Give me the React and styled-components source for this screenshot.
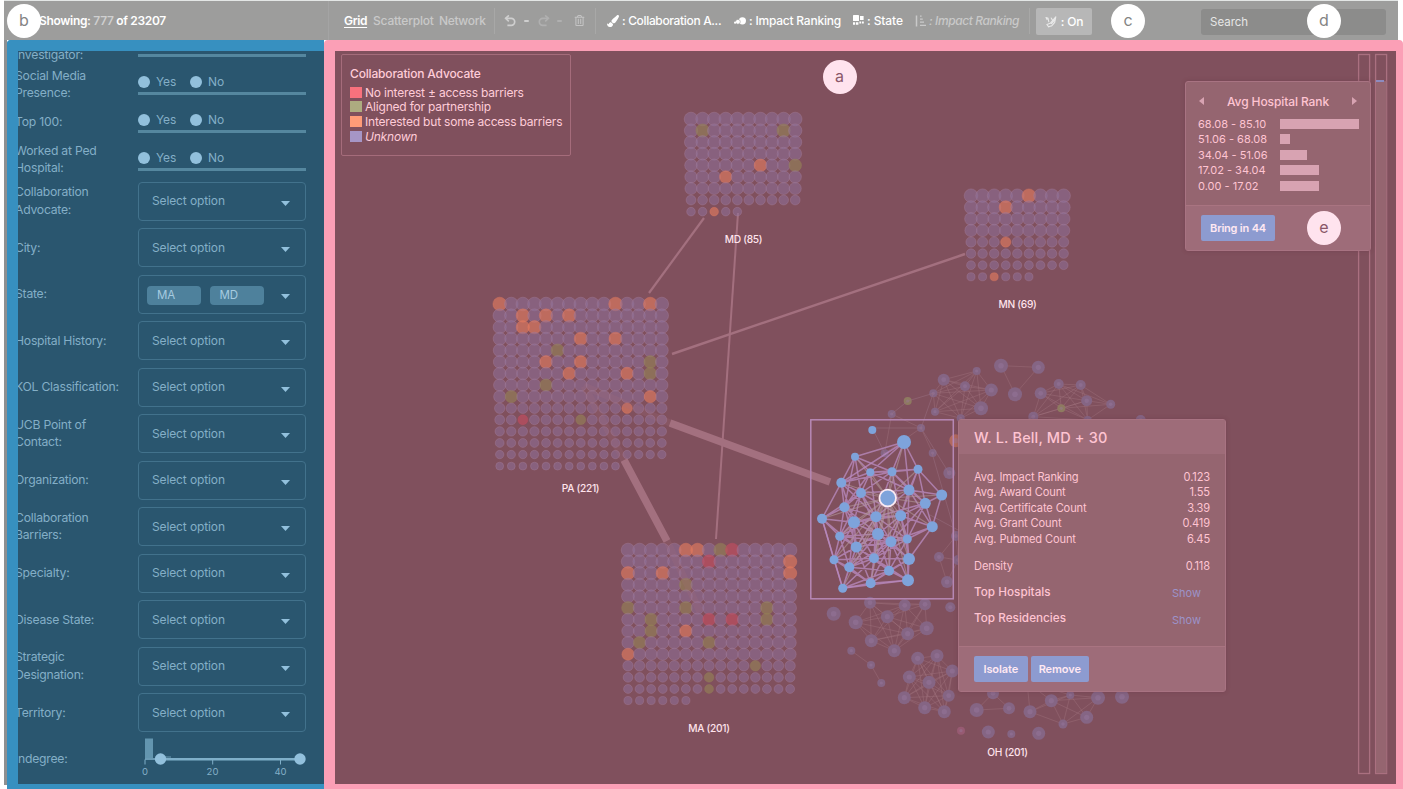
import React from "react";
import styled, { createGlobalStyle } from "styled-components";
import { FaPaintBrush, FaRegTrashAlt } from "react-icons/fa";

const Global = createGlobalStyle`
  * { box-sizing: border-box; }
  body { margin: 0; background: #fff; }
  #root { width: 1403px; height: 789px; overflow: hidden; }
`;

const Page = styled.div`
  position: relative;
  width: 1403px;
  height: 789px;
  display: flex;
  flex-direction: column;
  overflow: hidden;
  font-family: Inter, "Liberation Sans", sans-serif;
  font-size: 12px;
`;

const TopBar = styled.header`
  flex: none;
  height: 40px;
  margin: 0 5px 0 4px;
  border-top: 1px solid #e3e6e5;
  background: #9d9d9c;
  display: flex;
  align-items: center;
  color: #fff;
`;

const Count = styled.div`
  width: 325px;
  height: 39px;
  line-height: 40px;
  padding-left: 35px;
  border-right: 1px solid #a4a4a4;
  font-weight: 600;
  font-size: 12px;
  letter-spacing: -0.32px;
  span { color: #cfcfcf; }
`;

const Slot = styled.div`
  flex: none;
  width: ${(p) => p.$w}px;
  margin-left: ${(p) => p.$gap || 0}px;
  height: 26px;
  display: flex;
  align-items: center;
  white-space: nowrap;
  color: ${(p) => p.$color || "#fff"};
  font-size: 12px;
  font-weight: ${(p) => p.$weight || 500};
  font-style: ${(p) => (p.$italic ? "italic" : "normal")};
  text-decoration: ${(p) => (p.$active ? "underline" : "none")};
  text-underline-offset: 2px;
  letter-spacing: ${(p) => p.$track || 0}px;
  svg { flex: none; margin-right: 3px; }
`;

const Rule = styled.i`
  flex: none;
  width: 1px;
  height: 26px;
  margin-left: ${(p) => p.$gap}px;
  background: #a8a8a7;
`;

const Caret = styled.i`
  flex: none;
  width: 5px;
  height: 2px;
  margin-left: ${(p) => p.$gap}px;
  border-radius: 1px;
  background: ${(p) => p.$color};
`;

const Toggle = styled.div`
  width: 56px;
  height: 27px;
  margin: 2px 0 0 6px;
  border-radius: 2px;
  background: #b7b7b7;
  display: flex;
  align-items: center;
  justify-content: center;
  gap: 4px;
  font-weight: 500;
  letter-spacing: -0.2px;
`;

const Search = styled.div`
  width: 185px;
  height: 26px;
  margin: 2px 0 0 109px;
  padding-left: 9px;
  border-radius: 3px;
  background: #8c8c8b;
  line-height: 27px;
  font-size: 11.5px;
  color: #e6e6e6;
`;

const Body = styled.div`
  flex: 1;
  min-height: 0;
  display: flex;
  padding-left: 7px;
  background: linear-gradient(90deg, #fff 4px, #8e9091 4px, #8e9091 7px, #fff 7px) 0 0 / 100% 745px no-repeat;
`;

const Sidebar = styled.aside`
  flex: none;
  width: 317px;
  border: 11px solid #3790c0;
  border-right: 0;
  border-bottom-width: 5px;
  border-top-left-radius: 4px;
  background: #2a566f;
  overflow: hidden;
  color: #84afc7;
`;

const Filters = styled.div`
  margin: -32px 0 0 -3px;
  width: 300px;
`;

const RadioGroup = styled.div`
  margin-bottom: 7px;
`;

const RadioRow = styled.div`
  height: 38px;
  display: flex;
`;

const RadioLabel = styled.div`
  width: 123px;
  height: 38px;
  margin-top: ${(p) => p.$top || 8}px;
  display: flex;
  align-items: center;
  line-height: 17.4px;
  font-size: 12.2px;
  letter-spacing: -0.22px;
`;

const RadioField = styled.div`
  width: 168px;
  height: 38px;
  border-bottom: 3px solid #55879f;
  display: flex;
  align-items: center;
  padding-top: 14px;
  font-size: 12px;
`;

const Dot = styled.i`
  width: 12px;
  height: 12px;
  border-radius: 50%;
  background: #92c0dc;
  margin-right: 6px;
`;

const Option = styled.div`
  width: 52px;
  display: flex;
  align-items: center;
  letter-spacing: -0.1px;
`;

const SelectRow = styled.div`
  height: 46.5px;
  display: flex;
  align-items: center;
`;

const SelectLabel = styled.div`
  width: ${(p) => p.$w || 123}px;
  line-height: 17.4px;
  font-size: 12.2px;
  letter-spacing: -0.24px;
  padding-bottom: 1px;
`;

const SelectBox = styled.div`
  width: 168px;
  height: 39px;
  border: 1px solid #42728c;
  border-radius: 4px;
  padding: 0 15px 1px 13px;
  display: flex;
  align-items: center;
  justify-content: space-between;
  font-size: 12px;
  letter-spacing: -0.12px;
  svg { margin-top: 5px; }
`;

const Tags = styled.div`
  display: flex;
  gap: 9px;
  margin: 4px 0 0 -5px;
`;

const Tag = styled.div`
  width: 54px;
  height: 19px;
  padding-right: 16px;
  border-radius: 4px;
  background: #4e819c;
  color: #a5cbe0;
  text-align: right;
  padding-right: 26px;
  line-height: 19px;
  font-size: 11.5px;
`;

const Main = styled.main`
  flex: none;
  position: relative;
  width: 1079px;
  border: 11px solid #fb9fb6;
  border-right-width: 7px;
  border-bottom-width: 5px;
  border-radius: 4px 4px 0 0;
  background: #80505d;
`;

const Canvas = styled.svg`
  display: block;
  width: 1061px;
  height: 733px;
  text { font: 500 10.2px Inter, sans-serif; letter-spacing: -0.3px; fill: #ffe3ec; text-anchor: middle; }
`;

const Legend = styled.div`
  position: absolute;
  left: 6px;
  top: 3px;
  width: 230px;
  height: 102px;
  border: 1.5px solid #a56c7b;
  border-radius: 2px;
  padding: 11px 8px;
  color: #ffccd8;
`;

const LegendTitle = styled.div`
  line-height: 15px;
  margin-bottom: 4px;
  font-size: 12px;
  font-weight: 500;
  letter-spacing: -0.17px;
`;

const LegendItem = styled.div`
  height: 14.6px;
  display: flex;
  align-items: center;
  white-space: nowrap;
  font-size: 12px;
  letter-spacing: -0.2px;
  font-style: ${(p) => (p.$italic ? "italic" : "normal")};
  i { flex: none; width: 12px; height: 11px; margin-right: 3px; background: ${(p) => p.$color}; }
`;

const Panel = styled.section`
  position: absolute;
  left: ${(p) => p.$x}px;
  top: ${(p) => p.$y}px;
  width: ${(p) => p.$w}px;
  height: ${(p) => p.$h}px;
  border: 1px solid #a87382;
  border-radius: 3px;
  background: #956570;
  display: flex;
  flex-direction: column;
  color: #ffc4d2;
  box-shadow: 0 0 4px rgba(90, 40, 55, 0.3);
`;

const PagerHead = styled.div`
  height: 30px;
  margin-top: 4px;
  padding: 0 13px;
  display: flex;
  align-items: center;
  justify-content: space-between;
  font-size: 12px;
  font-weight: 500;
  letter-spacing: -0.1px;
`;

const BarRow = styled.div`
  height: 15.5px;
  padding-left: 12px;
  display: flex;
  align-items: center;
  font-size: 11px;
  span { width: 82px; }
  i { height: 10px; background: #d8a3b2; }
`;

const PanelFoot = styled.div`
  height: 45px;
  margin-top: auto;
  border-top: 1px solid #a97481;
  background: #9e6c79;
  display: flex;
  align-items: center;
  gap: 3px;
  padding-left: 15px;
`;

const Button = styled.div`
  width: ${(p) => p.$w}px;
  height: 26px;
  border-radius: 2px;
  background: #8d9bd0;
  color: #ffe8f2;
  text-align: center;
  line-height: 26px;
  font-size: 11px;
  font-weight: 600;
  letter-spacing: ${(p) => p.$track || -0.1}px;
`;

const DetailHead = styled.div`
  height: 34px;
  padding-left: 15px;
  background: #9e6c79;
  line-height: 35px;
  font-size: 14.5px;
  font-weight: 500;
  letter-spacing: 0.15px;
`;

const DetailRow = styled.div`
  height: 15.5px;
  margin: ${(p) => p.$top || 0}px 15px 0;
  display: flex;
  align-items: center;
  justify-content: space-between;
  font-size: ${(p) => (p.$strong ? 11.7 : 11.1)}px;
  font-weight: ${(p) => (p.$strong ? 500 : 400)};
  letter-spacing: ${(p) => (p.$strong ? 0.03 : -0.13)}px;
  a { color: #9c93c9; font-weight: 400; font-size: 11px; margin: 3px 9px 0 0; }
`;

const Badge = styled.div`
  position: absolute;
  left: ${(p) => p.$x - 17}px;
  top: ${(p) => p.$y - 17}px;
  width: 34px;
  height: 34px;
  border-radius: 50%;
  background: ${(p) => (p.$pink ? "#ffe3ee" : "#fff")};
  color: ${(p) => (p.$pink ? "#8a5768" : "#848484")};
  text-align: center;
  line-height: 33px;
  font-size: 16px;
`;

const FlippedSvg = styled.svg`
  transform: ${(p) => (p.$flip ? "scaleX(-1)" : "none")};
`;

const UndoIcon = ({ flip, color }) => (
  <FlippedSvg $flip={flip} width="12" height="12" viewBox="0 0 12 12">
    <path d="M1.800 3.300H7.200a3.500 3.500 0 0 1 0 7H3.400" fill="none" stroke={color} strokeWidth="1.700" />
    <path d="M4.900 .4L1.600 3.300l3.200 3" fill="none" stroke={color} strokeWidth="1.600" />
  </FlippedSvg>
);

const SizeIcon = () => (
  <svg width="12" height="8" viewBox="0 0 12 8">
    <circle cx="8.4" cy="3.8" r="3.6" fill="#fff" />
    <circle cx="3.9" cy="4.8" r="2.4" fill="#fff" stroke="#9d9d9c" strokeWidth=".6" />
    <circle cx="1.1" cy="5.7" r="1.1" fill="#fff" />
  </svg>
);

const GroupIcon = () => (
  <svg width="11" height="11" viewBox="0 0 11 11" fill="#fff">
    <rect x="0" y="0" width="6" height="6" rx=".6" />
    <path d="M7 1h3.6v4H7zM0 7.2h2.2v2.6H0zM3 7.2h2.4v2.6H3zM6.4 6.6h1.8v1.8H6.4zM9 6.6h1.8v1.8H9z" />
  </svg>
);

const SortIcon = () => (
  <svg width="11" height="12" viewBox="0 0 11 12" fill="none" stroke="#c9c9c9">
    <path d="M1.5 0.5v11" strokeWidth="1.5" />
    <path d="M5 1.2h1.6M5 4.2h2.8M5 7.2h4M5 10.4h6" strokeWidth="1.3" />
  </svg>
);

const EdgesIcon = () => (
  <svg width="12" height="12" viewBox="0 0 12 12" fill="none" stroke="#e9e9e9" strokeWidth="1.1" strokeLinecap="round">
    <path d="M1 1.6l2 .6.8 3.6M1 1.6l1 2M10.8 .9L5.2 7.3M10.8 .9L9.7 6.4l-3 3.4M5.2 7.3L2 8.6l1.6 2.2 3.1-1M6.2 2l1 1.8M9.7 3.9L6.5 7.6" />
  </svg>
);

const Chevron = () => (
  <svg width="9" height="5" viewBox="0 0 9 5"><path d="M0 0h9L4.5 5z" fill="#92c0dc" /></svg>
);

const Slider = () => (
  <svg width="180" height="48" viewBox="135 735.500 180 48">
    <rect x="145" y="739" width="8" height="20" fill="#6395af" />
    <path d="M145 759.5H300" stroke="#6a9ab4" strokeWidth="2" />
    <path d="M161 759.8H300" stroke="#7fafc9" strokeWidth="2.4" />
    <path d="M160 757.5h11" stroke="#6a9ab4" strokeWidth="1" />
    <path d="M145 760v5M212.700 760v5M280.500 760v5" stroke="#7fafc9" />
    <circle cx="160.500" cy="759.500" r="5.700" fill="#92c0dc" />
    <circle cx="300" cy="759.500" r="5.700" fill="#92c0dc" />
    <g fill="#84afc7" fontFamily="Inter" fontSize="9.5" textAnchor="middle">
      <text x="145" y="775">0</text>
      <text x="212.500" y="775">20</text>
      <text x="280.500" y="775">40</text>
    </g>
  </svg>
);

const TINT = { p: "#8f719c", o: "#e27a60", g: "#948058", r: "#c44c60" };

const CLUSTERS = [
  { name: "MD (85)", lx: 743.5, ly: 243, x: 691, y: 119, cols: 10, n: 85, big: 6.5,
    o: "4,6 5,3 8,2", g: "1,1 1,8 4,9", r: "" },
  { name: "MN (69)", lx: 1017.5, ly: 308, x: 971, y: 195.7, cols: 9, n: 69, big: 3.8,
    o: "0,5 1,3 4,3 7,2", g: "", r: "" },
  { name: "PA (221)", lx: 580.5, ly: 492, x: 499.7, y: 304, cols: 15, n: 221, big: 9,
    o: "0,0 0,10 0,13 1,2 1,4 1,6 2,2 2,3 3,7 3,10 5,4 5,7 6,6 6,11 8,13 9,11", g: "4,5 5,13 6,13 7,4 8,1 10,7", r: "10,2" },
  { name: "MA (201)", lx: 709, ly: 731.5, x: 628, y: 550, cols: 15, n: 201, big: 10,
    o: "0,5 0,6 1,14 2,0 2,3 2,14 7,5 9,0", g: "0,8 3,5 5,0 5,5 5,12 6,2 6,12 7,2 8,1 8,7 10,11 11,7 12,7", r: "0,9 1,7 6,7 6,9" },
];

const PITCH = 11.58;

const Cluster = ({ c }) => {
  const rows = Math.ceil(c.n / c.cols);
  return (
    <g>
      {Array.from({ length: c.n }, (_, i) => {
        const row = Math.floor(i / c.cols);
        const col = i % c.cols;
        const key = `${row},${col}`;
        const kind = ["o", "g", "r"].find((k) => c[k].split(" ").includes(key)) || "p";
        const radius = row < c.big ? 6.8 - (0.8 * row) / c.big : 5.2 - (1.5 * (row - c.big)) / (rows - c.big);
        return (
          <circle key={key} cx={c.x + col * PITCH} cy={c.y + row * PITCH} r={radius}
            fill={TINT[kind]} fillOpacity={kind === "p" ? 0.54 : 0.64}
            stroke={kind === "p" ? "#a9829e" : TINT[kind]} strokeOpacity="0.45" strokeWidth="0.8" />
        );
      })}
      <text x={c.lx} y={c.ly}>{c.name}</text>
    </g>
  );
};

// Network nodes: [x, y, radius]
const PICKED = [
  [904, 442, 7], [855, 456.7, 4], [870.3, 472.3, 4], [892, 471.7, 4.5], [918, 469.3, 4.5], [841.3, 482.7, 5],
  [861, 493, 5], [909, 490, 5.5], [941.7, 495, 5.5], [925.3, 503.3, 5.5], [844.3, 507.3, 5], [822, 518.7, 5],
  [876, 516.7, 5.5], [900.7, 515.7, 5.5], [854, 522.3, 6], [932.3, 526.7, 5.5], [839.7, 536.3, 4.5], [878, 534, 6],
  [907.3, 539, 4.5], [891, 541.7, 5.5], [856.3, 547, 5.5], [909, 559, 6], [834, 559.7, 4.5], [874, 558.3, 5],
  [849.3, 567.3, 5], [889, 570.7, 5], [908, 580.3, 6], [870.7, 583.3, 5], [842.7, 588.3, 4.5],
];
const HUB = [887.7, 498, 8];

const FAINT = [
  { reach: 62, nodes: [[943.7, 379.7, 6], [976.7, 371, 4], [965, 386.3, 5], [991.3, 390, 6.5], [981, 408.3, 7], [933.3, 393.3, 4], [935, 411.7, 4], [960.7, 418.3, 4]] },
  { reach: 45, nodes: [[1001, 365.7, 7], [1038.3, 367.3, 6.5], [1015, 394.3, 7]] },
  { reach: 64, nodes: [[1058.7, 384, 5], [1080.7, 385, 5], [1040.7, 393.3, 6], [1086.7, 400.7, 5.5], [1110.7, 404.3, 4.5], [1033.3, 416.7, 5], [1061.3, 408.3, 4, "g"], [1087.7, 420, 4]] },
  { reach: 46, nodes: [[891.7, 414, 4], [921, 428, 4], [932.7, 453, 4], [884.7, 453.3, 4]] },
  { reach: 40, nodes: [[949.3, 473, 6], [956, 536, 5], [939, 557, 5], [947, 582, 6], [958, 560, 5]] },
  { reach: 58, nodes: [[870, 602.7, 6], [904.7, 605.3, 6], [925, 604.3, 6], [887.3, 616.7, 6.5], [855.7, 622.3, 7], [926.7, 628.3, 7], [907.7, 633.7, 6.5], [871.3, 640.7, 6.5], [894.3, 650.7, 6.5]] },
  { reach: 34, nodes: [[851.3, 650.7, 4], [871, 665, 4], [881.3, 683, 4]] },
  { reach: 60, nodes: [[917.7, 658.3, 6.5], [937, 655.7, 6.5], [952.3, 671, 6.5], [909.3, 677, 6.5], [929, 682.3, 6.5], [904.3, 697.7, 6.5], [948.7, 695.7, 6], [924.7, 707.7, 6.5], [944.3, 711.7, 6.5]] },
  { reach: 42, nodes: [[976.7, 710, 7], [1009, 708.3, 6], [993, 693.3, 6]] },
  { reach: 52, nodes: [[1030, 711.7, 6.5], [1051.3, 700.7, 6.5], [1070.3, 695, 4], [1098, 697.7, 7], [1086.7, 717.3, 6.5], [1063, 724, 4.5], [1027, 682, 5]] },
  { reach: 0, nodes: [[907.7, 401, 4, "g"], [1140.7, 420, 5], [955.7, 440.7, 6.5, "o"], [833.7, 613.7, 7], [950.3, 607.3, 5], [1122, 696.7, 7], [961, 730.7, 4, "m"], [988.3, 732, 6.5], [1011.3, 734, 4], [1038.7, 733.3, 6.5]] },
];

const FAINT_TINT = { p: "#856584", m: "#975a72", o: "#b2695f", g: "#8e7a60" };

const pairs = (nodes, reach) => {
  const out = [];
  nodes.forEach((a, i) =>
    nodes.slice(i + 1).forEach((b) => {
      if (Math.hypot(a[0] - b[0], a[1] - b[1]) < reach) out.push(`M${a[0]} ${a[1]}L${b[0]} ${b[1]}`);
    })
  );
  return out.join("");
};

const Graph = () => (
  <Canvas viewBox="335 51 1061 733">
    <g stroke="#a3707f">
      <path d="M704 218L649 293" strokeWidth="2.2" />
      <path d="M738 213L716 539" strokeWidth="2" />
      <path d="M672 354L965 254" strokeWidth="2.4" />
      <path d="M624 460L667 541M670 423L830 482" strokeWidth="7.5" />
    </g>
    {CLUSTERS.map((c) => <Cluster key={c.name} c={c} />)}
    <path d="M584 386L624 460M584 386L670 423M667 541L700 612" stroke="#a3707f" strokeWidth="7" strokeOpacity="0.2" />
    {FAINT.map((g, i) => (
      <g key={i}>
        <path d={pairs(g.nodes, g.reach)} stroke="#a47783" strokeOpacity="0.42" strokeWidth="0.9" fill="none" />
        {g.nodes.map(([x, y, r, kind = "p"]) => (
          <g key={`${x}-${y}`} fill={FAINT_TINT[kind]}>
            <circle cx={x} cy={y} r={r} />
            <circle cx={x} cy={y} r={r * 0.4} fill="#997aa0" fillOpacity="0.4" />
          </g>
        ))}
      </g>
    ))}
    <path d="M891.700 414L907.700 401L933.300 393.300L921 428H872.300L884.700 453M921 428L949 473M1033 417L1015 425M932 453L956 536M930 515L958 530" stroke="#9a6f82" strokeOpacity="0.5" fill="none" />
    <rect x="810.800" y="419.800" width="142.500" height="179" fill="none" stroke="#b688b5" strokeWidth="1.500" />
    <path d={pairs(PICKED, 52)} stroke="#b98abf" strokeOpacity="0.78" strokeWidth="1.5" fill="none" />
    <path d={PICKED.map(([x, y]) => `M${HUB[0]} ${HUB[1]}L${x} ${y}`).join("")} stroke="#b3979a" strokeOpacity="0.6" strokeWidth="1.2" />
    <path d="M822 518.700L842.700 588.300L908 580.300M904 442L841.300 482.700" stroke="#b98abf" strokeOpacity="0.8" strokeWidth="1.500" fill="none" />
    {[[872.3, 430, 4], ...PICKED].map(([x, y, r]) => <circle key={`${x}-${y}`} cx={x} cy={y} r={r} fill="#7ea3db" />)}
    <circle cx={HUB[0]} cy={HUB[1]} r={HUB[2] + 0.3} fill="#7ea3db" stroke="#fbeaf3" strokeWidth="1.8" />
    <text x="1007.500" y="755.500">OH (201)</text>
    <g fill="none" stroke="#aa7080" strokeWidth="1.3">
      <rect x="1358.600" y="54.500" width="11" height="719" />
      <rect x="1375.600" y="54.500" width="11" height="719" />
    </g>
    <rect x="1376" y="81" width="10.500" height="692" fill="#956570" />
    <rect x="1376" y="80" width="8" height="2" fill="#8d8bc0" />
  </Canvas>
);

const RADIOS = [["Investigator:", 17], [<>Social Media<br />Presence:</>], ["Top 100:"], [<>Worked at Ped<br />Hospital:</>, 7]];
const SELECTS = [
  <>Collaboration<br />Advocate:</>, "City:", "State:", "Hospital History:", "KOL Classification:", <>UCB Point of<br />Contact:</>,
  "Organization:", <>Collaboration<br />Barriers:</>, "Specialty:", "Disease State:", <>Strategic<br />Designation:</>, "Territory:",
];
const LEGEND = [
  ["No interest ± access barriers", "#f8717d"], ["Aligned for partnership", "#adab80"],
  ["Interested but some access barriers", "#ff9c78"], ["Unknown", "#a696c6"],
];
const RANKS = [["68.08 - 85.10", 79], ["51.06 - 68.08", 9.5], ["34.04 - 51.06", 27], ["17.02 - 34.04", 39], ["0.00 - 17.02", 39]];
const STATS = [["Avg. Impact Ranking", "0.123"], ["Avg. Award Count", "1.55"], ["Avg. Certificate Count", "3.39"], ["Avg. Grant Count", "0.419"], ["Avg. Pubmed Count", "6.45"]];

export default function App() {
  return (
    <Page>
      <Global />
      <TopBar>
        <Count>Showing: <span>777</span> of 23207</Count>
        <Slot $w={23} $gap={15} $active $weight={600} $track={-0.35}>Grid</Slot>
        <Slot $w={61} $gap={6} $color="#c9c9c9" $track={-0.2}>Scatterplot</Slot>
        <Slot $w={46} $gap={5} $color="#c9c9c9" $track={-0.35}>Network</Slot>
        <Rule $gap={9} />
        <Slot $w={12} $gap={9}><UndoIcon color="#cfcfcf" /></Slot>
        <Caret $gap={8} $color="#cfcfcf" />
        <Slot $w={12} $gap={9}><UndoIcon flip color="#b0b0b0" /></Slot>
        <Caret $gap={7} $color="#b0b0b0" />
        <Slot $w={10} $gap={12}><FaRegTrashAlt size={11} color="#c4c4c4" /></Slot>
        <Rule $gap={11} />
        <Slot $w={116} $gap={11} $track={-0.34}><FaPaintBrush size={12} />: Collaboration A...</Slot>
        <Slot $w={108} $gap={11} $track={-0.22}><SizeIcon />: Impact Ranking</Slot>
        <Slot $w={52} $gap={11} $track={-0.1}><GroupIcon />: State</Slot>
        <Slot $w={104} $gap={10} $italic $color="#c9c9c9" $track={-0.4}><SortIcon />: Impact Ranking</Slot>
        <Rule $gap={10} />
        <Toggle><EdgesIcon />: On</Toggle>
        <Search>Search</Search>
      </TopBar>
      <Body>
        <Sidebar>
          <Filters>
            <RadioGroup>
              {RADIOS.map(([label, top], i) => (
                <RadioRow key={i}>
                  <RadioLabel $top={top}>{label}</RadioLabel>
                  <RadioField>
                    {i > 0 && <><Option><Dot />Yes</Option><Option><Dot />No</Option></>}
                  </RadioField>
                </RadioRow>
              ))}
            </RadioGroup>
            {SELECTS.map((label, i) => (
              <SelectRow key={i}>
                <SelectLabel>{label}</SelectLabel>
                <SelectBox>
                  {i === 2 ? <Tags><Tag>MA</Tag><Tag>MD</Tag></Tags> : "Select option"}
                  <Chevron />
                </SelectBox>
              </SelectRow>
            ))}
            <SelectRow>
              <SelectLabel $w={120}>Indegree:</SelectLabel>
              <Slider />
            </SelectRow>
          </Filters>
        </Sidebar>
        <Main>
          <Graph />
          <Legend>
            <LegendTitle>Collaboration Advocate</LegendTitle>
            {LEGEND.map(([t, c]) => <LegendItem key={t} $color={c} $italic={t === "Unknown"}><i />{t}</LegendItem>)}
          </Legend>
          <Panel $x={850} $y={30} $w={186} $h={170}>
            <PagerHead>
              <svg width="5" height="8"><path d="M5 0v8L0 4z" fill="#d8a3b2" /></svg>
              Avg Hospital Rank
              <svg width="5" height="8"><path d="M0 0v8l5-4z" fill="#d8a3b2" /></svg>
            </PagerHead>
            {RANKS.map(([t, w]) => <BarRow key={t}><span>{t}</span><i style={{ width: w }} /></BarRow>)}
            <PanelFoot><Button $w={74} $track={-0.2}>Bring in 44</Button></PanelFoot>
          </Panel>
          <Panel $x={623} $y={368} $w={268} $h={273}>
            <DetailHead>W. L. Bell, MD + 30</DetailHead>
            {STATS.map(([t, v], i) => <DetailRow key={t} $top={i ? 0 : 15}>{t}<span>{v}</span></DetailRow>)}
            <DetailRow $top={12}>Density<span>0.118</span></DetailRow>
            <DetailRow $top={10} $strong>Top Hospitals<a>Show</a></DetailRow>
            <DetailRow $top={11} $strong>Top Residencies<a>Show</a></DetailRow>
            <PanelFoot><Button $w={53.5}>Isolate</Button><Button $w={58.5}>Remove</Button></PanelFoot>
          </Panel>
        </Main>
      </Body>
      <Badge $x={24} $y={21}>b</Badge>
      <Badge $x={1128} $y={21}>c</Badge>
      <Badge $x={1324} $y={21}>d</Badge>
      <Badge $x={839.5} $y={77} $pink>a</Badge>
      <Badge $x={1324} $y={228} $pink>e</Badge>
    </Page>
  );
}
